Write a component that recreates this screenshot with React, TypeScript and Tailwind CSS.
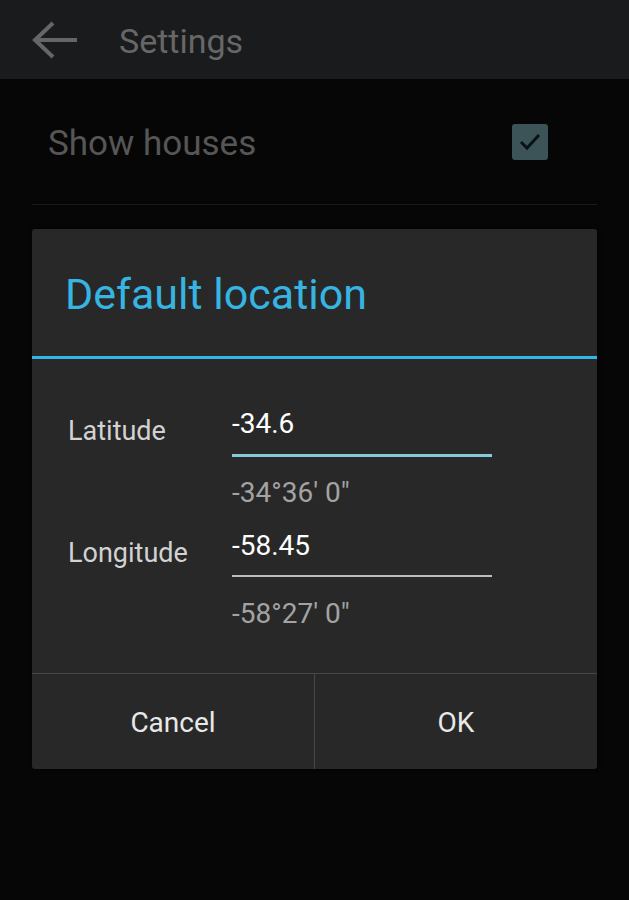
export default function App() {
  return (
    <div className="flex h-[900px] w-[629px] flex-col overflow-hidden bg-[#060606] font-['Roboto',sans-serif]">
      {/* dimmed action bar */}
      <div className="flex h-[79px] shrink-0 items-center bg-[#1a1b1d]">
        <svg className="ml-[31px]" width="48" height="40" viewBox="0 0 48 40" fill="none">
          <path d="M46 20H4M22 3L4 20l18 17" stroke="#666" strokeWidth="4" />
        </svg>
        <span className="ml-[40px] pt-[2px] text-[34px] leading-none text-[#676767]">Settings</span>
      </div>

      {/* dimmed preference row */}
      <div className="mx-[32px] flex h-[126px] shrink-0 items-center justify-between border-b border-[#1a1a1a] pl-[16px] pr-[49px]">
        <span className="pt-[4px] text-[35px] leading-none text-[#565656]">Show houses</span>
        <div className="flex h-[36px] w-[36px] items-center justify-center rounded-[3px] bg-[#3c5457]">
          <svg width="24" height="24" viewBox="0 0 24 24" fill="none">
            <path d="M3 12l6 6L21 5" stroke="#0b1214" strokeWidth="3" />
          </svg>
        </div>
      </div>

      {/* dialog */}
      <div className="mx-[32px] mt-[24px] flex h-[540px] flex-col rounded-[3px] bg-[#282828] shadow-[0_0_4px_rgba(0,0,0,0.6)]">
        <div className="flex h-[130px] shrink-0 items-center border-b-[3px] border-[#33b5e5] pl-[33px] pt-[4px]">
          <span className="text-[43px] leading-none text-[#36b4e2]">Default location</span>
        </div>

        <div className="flex flex-1 flex-col pl-[36px] pt-[51px]">
          <div className="flex">
            <span className="mt-[8px] w-[164px] text-[27px] leading-none text-[#d2d2d2]">Latitude</span>
            <div className="flex flex-col">
              <div className="w-[260px] border-b-[3px] border-[#86c9d8] pb-[16px] text-[28px] leading-none text-white">-34.6</div>
              <span className="mt-[22px] text-[28px] leading-none text-[#a3a3a3]">-34°36' 0"</span>
            </div>
          </div>
          <div className="mt-[25px] flex">
            <span className="mt-[8px] w-[164px] text-[27px] leading-none text-[#d2d2d2]">Longitude</span>
            <div className="flex flex-col">
              <div className="w-[260px] border-b-2 border-[#bdbdbd] pb-[15px] text-[28px] leading-none text-white">-58.45</div>
              <span className="mt-[23px] text-[28px] leading-none text-[#a3a3a3]">-58°27' 0"</span>
            </div>
          </div>
        </div>

        <div className="flex h-[96px] shrink-0 border-t border-[#474747]">
          <button className="flex-1 border-r border-[#474747] pt-[2px] text-[28px] leading-none text-[#e8e8e8]">Cancel</button>
          <button className="flex-1 pt-[2px] text-[28px] leading-none text-[#e8e8e8]">OK</button>
        </div>
      </div>
    </div>
  );
}
